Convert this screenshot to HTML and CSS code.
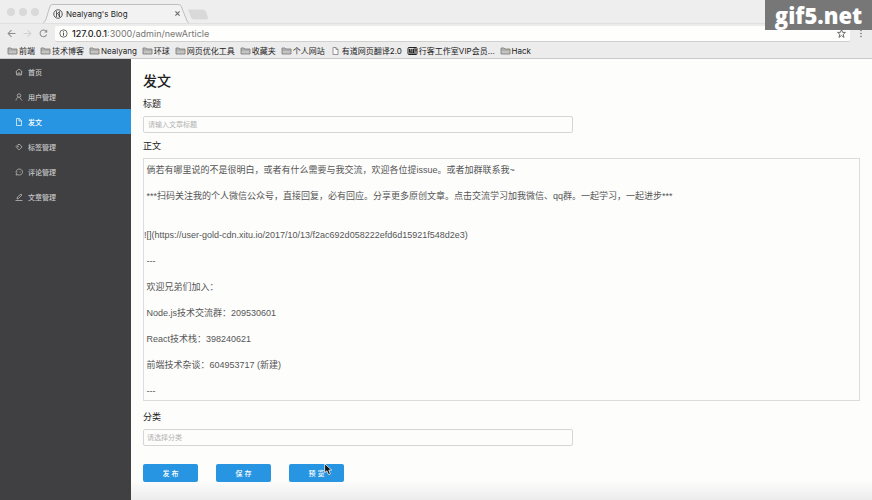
FILE: index.html
```
<!DOCTYPE html>
<html lang="zh-CN">

<head>
    <meta charset="UTF-8">
    <meta name="viewport" content="width=device-width, initial-scale=1.0">
    <title>Nealyang's Blog</title>
    <link rel="stylesheet" href="styles.css">
</head>

<body>
    <!-- shared icons -->
    <svg class="sprite" width="0" height="0">
        <symbol id="folder" viewBox="0 0 20 16">
            <path d="M1 14V2h6l2 2h10v10z" fill="#c3c4c2" stroke="#777" stroke-width="1.6" />
            <path d="M1 6h18" stroke="#8a8a8a" stroke-width="1.4" />
        </symbol>
    </svg>

    <header class="browser">
        <div class="tabs">
            <div class="lights"><span></span><span></span><span></span></div>
            <div class="tab">
                <svg class="tab-shape" viewBox="0 0 148 19" preserveAspectRatio="none">
                    <path d="M0 19C4 18 5 5 8 1Q8.500 .5 10 .5H137Q139 .5 140 2L146 17Q147 19 148 19" fill="#f3f2f3" stroke="#bdbdbd" />
                </svg>
                <svg class="tab-logo" viewBox="0 0 20 20" fill="none" stroke="#333">
                    <circle cx="10" cy="10" r="8.500" stroke-width="1.600" />
                    <path d="M7 4v12M7 11l6-6v11M10 9l3 7" stroke-width="1.500" />
                </svg>
                <span class="tab-title">Nealyang's Blog</span>
                <button class="tab-close" aria-label="Close">
                    <svg viewBox="0 0 10 10"><path d="M2 2l6 6M8 2L2 8" stroke="#666" stroke-width="1.500" /></svg>
                </button>
            </div>
            <svg class="new-tab" viewBox="0 0 22 11"><path d="M1 .5h15q2 0 3 2l2 6q0 2-2 2H7q-2 0-3-2z" fill="#d9d9da" /></svg>
        </div>

        <div class="toolbar">
            <button aria-label="Back">
                <svg viewBox="0 0 16 16" fill="none" stroke="#8c8c8d" stroke-width="1.800"><path d="M15 8H2M8 2L2 8l6 6" /></svg>
            </button>
            <button aria-label="Forward">
                <svg viewBox="0 0 16 16" fill="none" stroke="#d2d2d3" stroke-width="1.800"><path d="M1 8h13M8 2l6 6-6 6" /></svg>
            </button>
            <button aria-label="Reload">
                <svg viewBox="0 0 16 16" fill="none" stroke="#8c8c8d" stroke-width="1.800"><path d="M13.500 10A6 6 0 1 1 12 3.500l2 2" /><path d="M14.500 1v5h-5z" fill="#8c8c8d" stroke="none" /></svg>
            </button>
            <div class="address">
                <svg viewBox="0 0 16 16" fill="none" stroke="#555" stroke-width="1.500"><circle cx="8" cy="8" r="6.500" /><path d="M8 7v5M8 4v2" stroke-width="1.800" /></svg>
                <span class="url"><b>127.0.0.1</b>:3000/admin/newArticle</span>
                <svg viewBox="0 0 16 16" fill="none" stroke="#555" stroke-width="1.500"><path d="M8 1l2 5h5l-4 3.500 1.500 5.500L8 11.500 3.500 15 5 9.500 1 6h5z" /></svg>
            </div>
            <button class="menu" aria-label="Menu">
                <svg viewBox="0 0 16 16" fill="#666"><circle cx="8" cy="2" r="1.500" /><circle cx="8" cy="8" r="1.500" /><circle cx="8" cy="14" r="1.500" /></svg>
            </button>
        </div>

        <nav class="bookmarks">
            <a href="#"><svg><use href="#folder" /></svg>前端</a>
            <a href="#"><svg><use href="#folder" /></svg>技术博客</a>
            <a href="#"><svg><use href="#folder" /></svg>Nealyang</a>
            <a href="#"><svg><use href="#folder" /></svg>环球</a>
            <a href="#"><svg><use href="#folder" /></svg>网页优化工具</a>
            <a href="#"><svg><use href="#folder" /></svg>收藏夹</a>
            <a href="#"><svg><use href="#folder" /></svg>个人网站</a>
            <a href="#"><svg viewBox="0 0 20 16"><path d="M5 1h6l4 4v10H5zM11 1v4h4" fill="#fafafa" stroke="#777" stroke-width="1.500" /></svg>有道网页翻译2.0</a>
            <a href="#"><svg viewBox="0 0 20 16"><rect x="1" y="1" width="18" height="14" rx="2" fill="#ddd" stroke="#222" stroke-width="2" /><path d="M4 4v6h3V4M9 4v8M12 12V4h5v4h-4M3 12h14" fill="none" stroke="#222" stroke-width="2" /></svg>行客工作室VIP会员…</a>
            <a href="#"><svg><use href="#folder" /></svg>Hack</a>
        </nav>
    </header>

    <div class="layout">
        <nav class="sider">
            <a href="#">
                <svg viewBox="0 0 16 16"><path d="M1 8l7-6 7 6M3 7v7h10V7M6 14v-4h4v4" /></svg>首页
            </a>
            <a href="#">
                <svg viewBox="0 0 16 16"><circle cx="8" cy="5" r="3.500" /><path d="M2 15c0-4 3-6 5-6.500M9 8.500l5 6.500" /></svg>用户管理
            </a>
            <a href="#" class="active">
                <svg viewBox="0 0 16 16"><path d="M3 1h6l4 5v9H3zM8 1v5h5" /></svg>发文
            </a>
            <a href="#">
                <svg viewBox="0 0 16 16"><path d="M2 7l4-4h4l4 5-5 5H7z" /><circle cx="6" cy="7" r=".8" /></svg>标签管理
            </a>
            <a href="#">
                <svg viewBox="0 0 16 16"><path d="M2 14l1-3a6.500 6 0 1 1 3 2.500zM5 8h1M8 8h1M11 8h1" /></svg>评论管理
            </a>
            <a href="#">
                <svg viewBox="0 0 16 16"><path d="M4 12l1-4 7-6 2 2-7 7zM1 15h14" /></svg>文章管理
            </a>
        </nav>

        <main class="content">
            <h1>发文</h1>
            <form>
                <div class="field">
                    <label for="title">标题</label>
                    <input type="text" id="title" placeholder="请输入文章标题">
                </div>
                <div class="field editor">
                    <label for="body">正文</label>
                    <textarea id="body" spellcheck="false"> 倘若有哪里说的不是很明白，或者有什么需要与我交流，欢迎各位提issue。或者加群联系我~

 ***扫码关注我的个人微信公众号，直接回复，必有回应。分享更多原创文章。点击交流学习加我微信、qq群。一起学习，一起进步***


![](https://user-gold-cdn.xitu.io/2017/10/13/f2ac692d058222efd6d15921f548d2e3)

 ---

 欢迎兄弟们加入：

 Node.js技术交流群：209530601

 React技术栈：398240621

 前端技术杂谈：604953717 (新建)

 ---</textarea>
                </div>
                <div class="field">
                    <label for="category">分类</label>
                    <input type="text" id="category" class="category" placeholder="请选择分类">
                </div>
                <div class="actions">
                    <button type="button">发 布</button>
                    <button type="button">保 存</button>
                    <button type="button">预 览</button>
                </div>
            </form>
        </main>
    </div>

    <div class="watermark">gif5.net</div>
    <svg class="cursor" viewBox="0 0 14 20"><path d="M1 1v14l3.500-3 2.500 6 3-1-2.500-6H12z" fill="#111" stroke="#fff" stroke-width="1.200" /></svg>
</body>

</html>
```
FILE: styles.css
```
* {
    box-sizing: border-box;
}

body {
    margin: 0;
    min-height: 100vh;
    display: flex;
    flex-direction: column;
    position: relative;
    overflow: hidden;
    background-color: #fdfdfc;
    color: #222;
    font-family: "Liberation Sans", "Noto Sans CJK SC", sans-serif;
}

button,
input,
textarea {
    font-family: inherit;
    margin: 0;
}

a {
    color: inherit;
    text-decoration: none;
}

.sprite {
    position: absolute;
}

/* Browser */
.browser {
    background-color: #ececed;
    border-bottom: 1px solid #c9c9cb;
    font-family: Inter, "Noto Sans CJK SC", sans-serif;
}

.browser button {
    border: 0;
    padding: 0;
    background: none;
    display: flex;
}

.tabs {
    display: flex;
    align-items: flex-end;
    height: 24px;
    padding-left: 7px;
    background-color: #eeeeef;
    border-bottom: 1px solid #e0e0e1;
}

.lights {
    display: flex;
    gap: 4px;
    align-self: center;
    margin-right: 4px;
}

.lights span {
    width: 8px;
    height: 8px;
    border-radius: 50%;
    background-color: #d9d9da;
}

.tab {
    width: 146px;
    height: 19px;
    display: flex;
    align-items: center;
    padding: 0 8px 0 10px;
    position: relative;
}

.tab-shape {
    position: absolute;
    left: 0;
    top: 0;
    width: 100%;
    height: 100%;
}

.tab-logo {
    position: relative;
    width: 10px;
    height: 10px;
}

.tab-title {
    position: relative;
    flex: 1;
    padding-left: 3px;
    font-size: 8px;
}

.tab-close {
    position: relative;
}

.tab-close svg {
    width: 7px;
    height: 7px;
}

.new-tab {
    width: 22px;
    height: 11px;
    margin: 0 0 3px -2px;
}

.toolbar {
    display: flex;
    align-items: center;
    gap: 7px;
    height: 19px;
    padding: 0 7px;
}

.toolbar svg {
    width: 9px;
    height: 9px;
}

.address {
    flex: 1;
    display: flex;
    align-items: center;
    gap: 4px;
    height: 16px;
    padding: 0 4px;
    background-color: #fefefc;
    border-bottom: 1px solid #d0d0d1;
    border-radius: 2px;
}

.url {
    flex: 1;
    color: #777;
    font-size: 9px;
}

.url b {
    color: #222;
    font-weight: 500;
}

.toolbar .menu svg {
    width: 8px;
}

.bookmarks {
    display: flex;
    align-items: center;
    gap: 5px;
    height: 15px;
    padding-left: 7px;
    font-size: 8px;
    line-height: 12px;
}

.bookmarks a {
    display: flex;
    align-items: center;
    gap: 1px;
    white-space: nowrap;
}

.bookmarks svg {
    width: 11px;
    height: 8px;
}

/* Layout */
.layout {
    flex: 1;
    display: flex;
}

.sider {
    width: 131px;
    background-color: #404042;
}

.sider a {
    display: flex;
    align-items: center;
    gap: 5px;
    height: 25px;
    padding-left: 15px;
    color: #c8c8c9;
    font-size: 7px;
    font-weight: 500;
}

.sider a.active {
    background-color: #2795e1;
    color: #fff;
}

.sider svg {
    width: 8px;
    height: 8px;
    fill: none;
    stroke: currentColor;
    stroke-width: 1.4;
}

.content {
    flex: 1;
    min-width: 0;
    padding: 12px;
    background: linear-gradient(transparent calc(100% - 20px), #ececed) no-repeat;
}

h1 {
    margin: 0 0 5px;
    font-size: 14px;
    line-height: 20px;
    font-weight: 500;
}

.field {
    display: flex;
    flex-direction: column;
    gap: 3px;
    margin-bottom: 5px;
}

.field label {
    font-size: 9px;
    line-height: 17px;
}

.field input {
    width: 60%;
    height: 17px;
    padding: 0 4px;
    border: 1px solid #d6d6d6;
    border-radius: 2px;
    background-color: transparent;
    font-size: 7px;
}

.field .category {
    padding: 0 3px;
}

.field input::placeholder {
    color: #b2b2b2;
}

.editor {
    margin-bottom: 8px;
}

.editor textarea {
    height: 243px;
    padding: 5px 0 0;
    border: 1px solid #dcdcdc;
    background-color: transparent;
    color: #555;
    font-size: 9px;
    line-height: 13px;
    resize: none;
    overflow: hidden;
}

.actions {
    display: flex;
    gap: 18px;
    padding-top: 13px;
}

.actions button {
    width: 55px;
    height: 18px;
    padding: 0;
    border: 0;
    border-radius: 2px;
    background-color: #2795e1;
    color: #fff;
    font-size: 7px;
    font-weight: 500;
}

/* Overlays */
.watermark {
    position: absolute;
    top: 0;
    right: 0;
    width: 107px;
    height: 30px;
    background-color: #777778;
    color: #fff;
    font: 800 22px/30px "Open Sans", "Noto Sans", sans-serif;
    text-align: center;
}

.cursor {
    position: absolute;
    left: 324px;
    top: 463px;
    width: 9px;
    height: 13px;
}
```
